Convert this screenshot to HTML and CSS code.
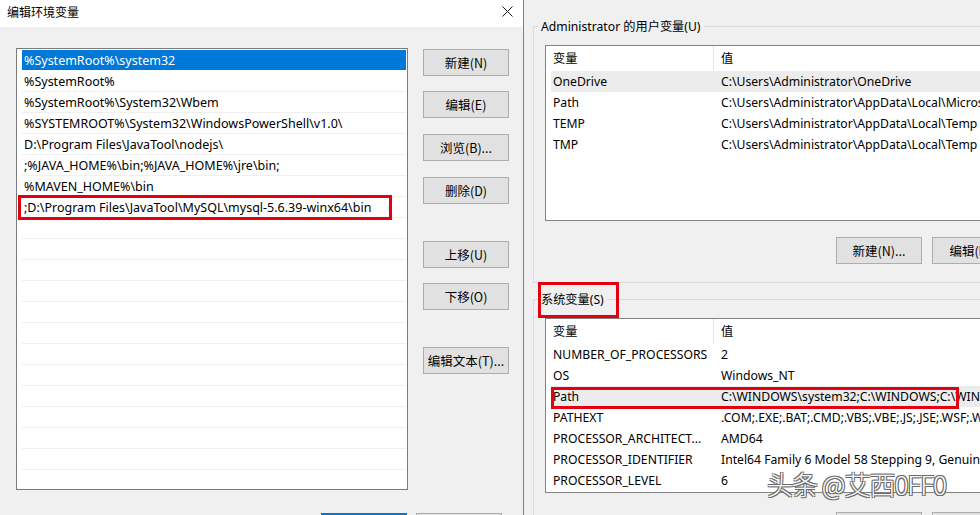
FILE: index.html
```html
<!DOCTYPE html>
<html lang="zh-CN">
<head>
<meta charset="utf-8">
<title>编辑环境变量</title>
<link rel="stylesheet" href="styles.css">
</head>
<body>
<div class="screen">
  <section class="dialog">
    <header class="titlebar">
      <span class="title">编辑环境变量</span>
      <svg class="close" width="11" height="11" viewBox="0 0 11 11"><path d="M0.5 0.5 L10.5 10.5 M10.5 0.5 L0.5 10.5" stroke="#1a1a1a" stroke-width="1" fill="none"/></svg>
    </header>
    <div class="dlg-body">
      <div class="main-row">
        <div class="pathlist">
          <div class="prow selected">%SystemRoot%\system32</div>
          <div class="prow">%SystemRoot%</div>
          <div class="prow">%SystemRoot%\System32\Wbem</div>
          <div class="prow">%SYSTEMROOT%\System32\WindowsPowerShell\v1.0\</div>
          <div class="prow">D:\Program Files\JavaTool\nodejs\</div>
          <div class="prow">;%JAVA_HOME%\bin;%JAVA_HOME%\jre\bin;</div>
          <div class="prow">%MAVEN_HOME%\bin</div>
          <div class="prow">;D:\Program Files\JavaTool\MySQL\mysql-5.6.39-winx64\bin</div>
          <div class="prow"></div>
          <div class="prow"></div>
          <div class="prow"></div>
          <div class="prow"></div>
          <div class="prow"></div>
          <div class="prow"></div>
          <div class="prow"></div>
          <div class="prow"></div>
          <div class="prow"></div>
          <div class="prow"></div>
          <div class="prow"></div>
          <div class="prow"></div>
          <div class="prow"></div>
          <span class="redbox red-path"></span>
        </div>
        <div class="btncol">
          <button class="btn">新建(N)</button>
          <button class="btn m15">编辑(E)</button>
          <button class="btn m16">浏览(B)...</button>
          <button class="btn m16">删除(D)</button>
          <button class="btn m37">上移(U)</button>
          <button class="btn m15">下移(O)</button>
          <button class="btn m37">编辑文本(T)...</button>
        </div>
      </div>
      <div class="footer">
        <button class="btn primary">确定</button>
        <button class="btn">取消</button>
      </div>
    </div>
  </section>

  <section class="envwin">
    <div class="group g1">
      <div class="gtitle">Administrator 的用户变量(U)</div>
      <div class="table t1">
        <div class="trow head"><span class="c1">变量</span><span class="c2">值</span></div>
        <div class="trow hl"><span class="c1">OneDrive</span><span class="c2">C:\Users\Administrator\OneDrive</span></div>
        <div class="trow"><span class="c1">Path</span><span class="c2">C:\Users\Administrator\AppData\Local\Microsoft\WindowsApps;</span></div>
        <div class="trow"><span class="c1">TEMP</span><span class="c2">C:\Users\Administrator\AppData\Local\Temp</span></div>
        <div class="trow"><span class="c1">TMP</span><span class="c2">C:\Users\Administrator\AppData\Local\Temp</span></div>
      </div>
      <div class="gbtns">
        <button class="btn">新建(N)...</button>
        <button class="btn">编辑(E)...</button>
        <button class="btn">删除(D)</button>
      </div>
    </div>
    <div class="group g2">
      <div class="gtitle">系统变量(S)<span class="redbox red-sys"></span></div>
      <div class="table t2">
        <div class="trow head"><span class="c1">变量</span><span class="c2">值</span></div>
        <div class="trow"><span class="c1">NUMBER_OF_PROCESSORS</span><span class="c2">2</span></div>
        <div class="trow"><span class="c1">OS</span><span class="c2">Windows_NT</span></div>
        <div class="trow hl"><span class="c1">Path</span><span class="c2">C:\WINDOWS\system32;C:\WINDOWS;C:\WINDOWS\System32\Wbem;</span><span class="redbox red-row"></span></div>
        <div class="trow"><span class="c1">PATHEXT</span><span class="c2">.COM;.EXE;.BAT;.CMD;.VBS;.VBE;.JS;.JSE;.WSF;.WSH;.MSC</span></div>
        <div class="trow"><span class="c1">PROCESSOR_ARCHITECT...</span><span class="c2">AMD64</span></div>
        <div class="trow"><span class="c1">PROCESSOR_IDENTIFIER</span><span class="c2">Intel64 Family 6 Model 58 Stepping 9, GenuineIntel</span></div>
        <div class="trow"><span class="c1">PROCESSOR_LEVEL</span><span class="c2">6</span></div>
      </div>
      <div class="gbtns">
        <button class="btn">新建(W)...</button>
        <button class="btn">编辑(I)...</button>
        <button class="btn">删除(L)</button>
      </div>
    </div>
    <div class="watermark">头条 @艾西0FF0</div>
  </section>
</div>
</body>
</html>
```
FILE: styles.css
```css
* { box-sizing: border-box; }
html, body { margin: 0; padding: 0; }
body {
  width: 980px;
  height: 515px;
  overflow: hidden;
  background: #f0f0f0;
  font-family: "Noto Sans", "Noto Sans CJK SC", sans-serif;
  font-size: 12.5px;
  color: #000;
}
.screen {
  display: flex;
  width: 980px;
  height: 515px;
  overflow: hidden;
}

/* left dialog */
.dialog {
  width: 524px;
  flex: none;
  border-right: 1px solid #3f8fd2;
  background: #f0f0f0;
  display: flex;
  flex-direction: column;
  overflow: hidden;
}
.titlebar {
  flex: none;
  height: 27px;
  background: #fff;
  display: flex;
  align-items: flex-start;
  justify-content: space-between;
  padding: 3px 10px 0 7px;
}
.title {
  font-family: "Noto Sans CJK SC", sans-serif;
  font-size: 12px;
  line-height: 18px;
  color: #000;
}
.close { margin-top: 3px; }
.dlg-body {
  flex: none;
  padding: 21px 0 0 16px;
}
.main-row {
  display: flex;
  align-items: flex-start;
}
.pathlist {
  position: relative;
  flex: none;
  width: 392px;
  height: 442px;
  border: 1px solid #7a7a7a;
  background: #fff;
  padding: 1px 1px 0 5px;
  overflow: hidden;
}
.prow {
  height: 21px;
  line-height: 21px;
  border-bottom: 1px solid #efefef;
  padding-left: 2px;
  white-space: nowrap;
}
.prow.selected {
  background: #0078d7;
  color: #fff;
  border-bottom-color: #fff;
}
.redbox {
  position: absolute;
  border: 3px solid #e3000f;
  pointer-events: none;
}
.red-path { left: 1px; top: 146px; width: 374px; height: 25px; }

.btncol {
  display: flex;
  flex-direction: column;
  margin-left: 15px;
  margin-top: 1px;
}
.btn {
  width: 86px;
  height: 27px;
  background: #e1e1e1;
  border: 1px solid #adadad;
  border-radius: 0;
  padding: 0;
  font-family: "Noto Sans CJK SC", sans-serif;
  font-size: 12.5px;
  color: #000;
  flex: none;
}
.m15 { margin-top: 15px; }
.m16 { margin-top: 16px; }
.m37 { margin-top: 37px; }
.footer {
  display: flex;
  justify-content: flex-end;
  gap: 9px;
  margin-top: 23px;
  padding-right: 21px;
}
.btn.primary { border: 2px solid #0078d7; }

/* right window */
.envwin {
  position: relative;
  flex: 1;
  min-width: 0;
  background: #f0f0f0;
  padding: 26px 0 0 9px;
  font-size: 12.2px;
}
.group {
  border: 1px solid #dcdcdc;
  border-right: none;
  width: 620px;
  padding: 0 0 0 11px;
}
.g1 { padding-bottom: 18px; }
.g2 { margin-top: 16px; border-bottom: none; }
.gtitle {
  position: relative;
  display: block;
  width: fit-content;
  margin: -9px 0 0 -7px;
  padding: 0 3px;
  background: #f0f0f0;
  line-height: 18px;
  font-family: "Noto Sans", "Noto Sans CJK SC", sans-serif;
  font-size: 12.2px;
}
.red-sys { left: 0px; top: -9px; width: 81px; height: 36px; }
.table {
  border: 1px solid #828282;
  border-right: none;
  background: #fff;
  width: 600px;
  margin-top: 9px;
  padding: 0 0 0 5px;
  overflow: hidden;
}
.t1 { height: 176px; }
.t2 { height: 175px; }
.trow {
  position: relative;
  display: flex;
  height: 21px;
  line-height: 21px;
  white-space: nowrap;
}
.trow.head {
  height: 25px;
  line-height: 24px;
  font-family: "Noto Sans CJK SC", sans-serif;
}
.trow.head .c1 { border-right: 1px solid #e5e5e5; }
.trow.hl { background: #ececec; }
.c1 { width: 163px; padding-left: 2px; flex: none; overflow: hidden; }
.c2 { padding-left: 7px; }
.red-row { left: 0px; top: 1px; width: 408px; height: 22px; }
.gbtns {
  display: flex;
  gap: 10px;
  margin-top: 16px;
  padding-left: 291px;
}
.g2 .gbtns { margin-top: 19px; }
.watermark {
  position: absolute;
  left: 243px;
  top: 467px;
  font-family: "Noto Sans CJK SC", sans-serif;
  font-weight: 300;
  font-size: 26px;
  letter-spacing: -1px;
  line-height: 34px;
  color: #fafafa;
  white-space: nowrap;
  text-shadow: 1px 1px 0 #6a6a6a, -1px -1px 0 #6a6a6a, 1px -1px 0 #6a6a6a, -1px 1px 0 #6a6a6a;
}
```
